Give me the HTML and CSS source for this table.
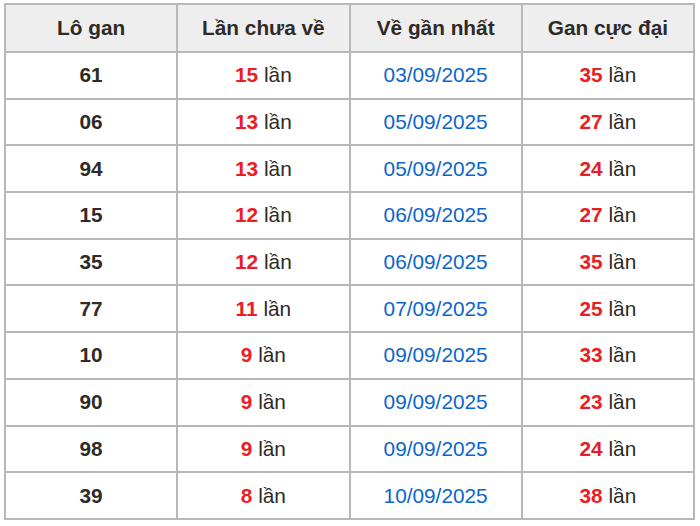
FILE: index.html
```html
<!DOCTYPE html>
<html lang="vi">
<head>
<meta charset="utf-8">
<link rel="stylesheet" href="styles.css">
</head>
<body>
<div class="wrap">
<table class="gan">
<thead>
<tr><th>Lô gan</th><th>Lần chưa về</th><th>Về gần nhất</th><th>Gan cực đại</th></tr>
</thead>
<tbody>
<tr><td class="num">61</td><td><span class="red">15</span> lần</td><td class="date">03/09/2025</td><td><span class="red">35</span> lần</td></tr>
<tr><td class="num">06</td><td><span class="red">13</span> lần</td><td class="date">05/09/2025</td><td><span class="red">27</span> lần</td></tr>
<tr><td class="num">94</td><td><span class="red">13</span> lần</td><td class="date">05/09/2025</td><td><span class="red">24</span> lần</td></tr>
<tr><td class="num">15</td><td><span class="red">12</span> lần</td><td class="date">06/09/2025</td><td><span class="red">27</span> lần</td></tr>
<tr><td class="num">35</td><td><span class="red">12</span> lần</td><td class="date">06/09/2025</td><td><span class="red">35</span> lần</td></tr>
<tr><td class="num">77</td><td><span class="red">11</span> lần</td><td class="date">07/09/2025</td><td><span class="red">25</span> lần</td></tr>
<tr><td class="num">10</td><td><span class="red">9</span> lần</td><td class="date">09/09/2025</td><td><span class="red">33</span> lần</td></tr>
<tr><td class="num">90</td><td><span class="red">9</span> lần</td><td class="date">09/09/2025</td><td><span class="red">23</span> lần</td></tr>
<tr><td class="num">98</td><td><span class="red">9</span> lần</td><td class="date">09/09/2025</td><td><span class="red">24</span> lần</td></tr>
<tr><td class="num">39</td><td><span class="red">8</span> lần</td><td class="date">10/09/2025</td><td><span class="red">38</span> lần</td></tr>
</tbody>
</table>
</div>
</body>
</html>
```
FILE: styles.css
```css
html, body {
  margin: 0;
  padding: 0;
  background: #ffffff;
}
.wrap {
  padding: 3px 0 0 4px;
}
.gan {
  width: 691px;
  border-collapse: collapse;
  table-layout: fixed;
  font-family: "Liberation Sans", Arial, sans-serif;
  font-size: 20.8px;
  color: #2e2a26;
}
.gan th, .gan td {
  border: 2px solid #b8b8b8;
  text-align: center;
  vertical-align: middle;
  padding: 0;
}
.gan th {
  background: #eeeeee;
  font-weight: bold;
  height: 46px;
}
.gan td {
  height: 44.7px;
}
.gan td.num {
  font-weight: bold;
}
.gan td.date {
  color: #0b66cc;
}
.red {
  color: #ec1c24;
  font-weight: bold;
}
```
